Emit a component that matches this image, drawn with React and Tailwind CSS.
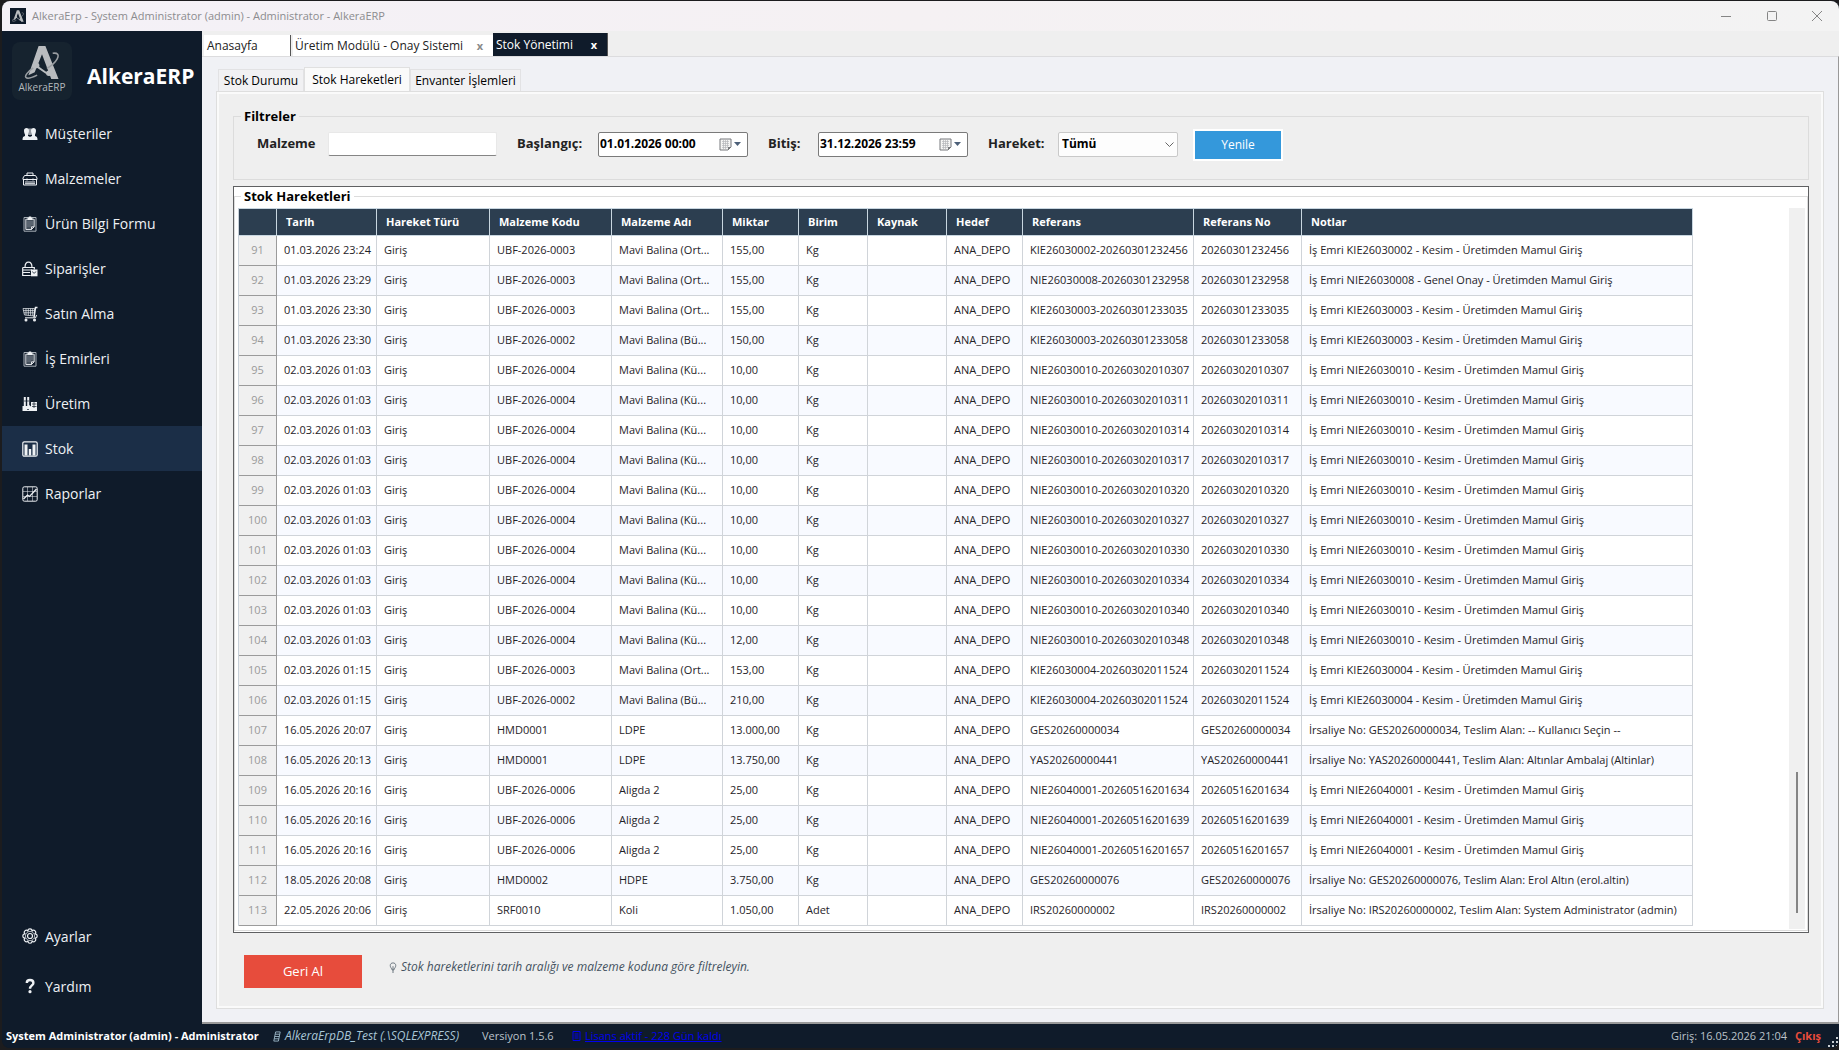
import React from "react";

const rows = [
  [91, "01.03.2026 23:24", "UBF-2026-0003", "Mavi Balina (Ort...", "155,00", "Kg", "KIE26030002-20260301232456", "20260301232456", "İş Emri KIE26030002 - Kesim - Üretimden Mamul Giriş"],
  [92, "01.03.2026 23:29", "UBF-2026-0003", "Mavi Balina (Ort...", "155,00", "Kg", "NIE26030008-20260301232958", "20260301232958", "İş Emri NIE26030008 - Genel Onay - Üretimden Mamul Giriş"],
  [93, "01.03.2026 23:30", "UBF-2026-0003", "Mavi Balina (Ort...", "155,00", "Kg", "KIE26030003-20260301233035", "20260301233035", "İş Emri KIE26030003 - Kesim - Üretimden Mamul Giriş"],
  [94, "01.03.2026 23:30", "UBF-2026-0002", "Mavi Balina (Bü...", "150,00", "Kg", "KIE26030003-20260301233058", "20260301233058", "İş Emri KIE26030003 - Kesim - Üretimden Mamul Giriş"],
  [95, "02.03.2026 01:03", "UBF-2026-0004", "Mavi Balina (Kü...", "10,00", "Kg", "NIE26030010-20260302010307", "20260302010307", "İş Emri NIE26030010 - Kesim - Üretimden Mamul Giriş"],
  [96, "02.03.2026 01:03", "UBF-2026-0004", "Mavi Balina (Kü...", "10,00", "Kg", "NIE26030010-20260302010311", "20260302010311", "İş Emri NIE26030010 - Kesim - Üretimden Mamul Giriş"],
  [97, "02.03.2026 01:03", "UBF-2026-0004", "Mavi Balina (Kü...", "10,00", "Kg", "NIE26030010-20260302010314", "20260302010314", "İş Emri NIE26030010 - Kesim - Üretimden Mamul Giriş"],
  [98, "02.03.2026 01:03", "UBF-2026-0004", "Mavi Balina (Kü...", "10,00", "Kg", "NIE26030010-20260302010317", "20260302010317", "İş Emri NIE26030010 - Kesim - Üretimden Mamul Giriş"],
  [99, "02.03.2026 01:03", "UBF-2026-0004", "Mavi Balina (Kü...", "10,00", "Kg", "NIE26030010-20260302010320", "20260302010320", "İş Emri NIE26030010 - Kesim - Üretimden Mamul Giriş"],
  [100, "02.03.2026 01:03", "UBF-2026-0004", "Mavi Balina (Kü...", "10,00", "Kg", "NIE26030010-20260302010327", "20260302010327", "İş Emri NIE26030010 - Kesim - Üretimden Mamul Giriş"],
  [101, "02.03.2026 01:03", "UBF-2026-0004", "Mavi Balina (Kü...", "10,00", "Kg", "NIE26030010-20260302010330", "20260302010330", "İş Emri NIE26030010 - Kesim - Üretimden Mamul Giriş"],
  [102, "02.03.2026 01:03", "UBF-2026-0004", "Mavi Balina (Kü...", "10,00", "Kg", "NIE26030010-20260302010334", "20260302010334", "İş Emri NIE26030010 - Kesim - Üretimden Mamul Giriş"],
  [103, "02.03.2026 01:03", "UBF-2026-0004", "Mavi Balina (Kü...", "10,00", "Kg", "NIE26030010-20260302010340", "20260302010340", "İş Emri NIE26030010 - Kesim - Üretimden Mamul Giriş"],
  [104, "02.03.2026 01:03", "UBF-2026-0004", "Mavi Balina (Kü...", "12,00", "Kg", "NIE26030010-20260302010348", "20260302010348", "İş Emri NIE26030010 - Kesim - Üretimden Mamul Giriş"],
  [105, "02.03.2026 01:15", "UBF-2026-0003", "Mavi Balina (Ort...", "153,00", "Kg", "KIE26030004-20260302011524", "20260302011524", "İş Emri KIE26030004 - Kesim - Üretimden Mamul Giriş"],
  [106, "02.03.2026 01:15", "UBF-2026-0002", "Mavi Balina (Bü...", "210,00", "Kg", "KIE26030004-20260302011524", "20260302011524", "İş Emri KIE26030004 - Kesim - Üretimden Mamul Giriş"],
  [107, "16.05.2026 20:07", "HMD0001", "LDPE", "13.000,00", "Kg", "GES20260000034", "GES20260000034", "İrsaliye No: GES20260000034, Teslim Alan: -- Kullanıcı Seçin --"],
  [108, "16.05.2026 20:13", "HMD0001", "LDPE", "13.750,00", "Kg", "YAS20260000441", "YAS20260000441", "İrsaliye No: YAS20260000441, Teslim Alan: Altınlar Ambalaj (Altinlar)"],
  [109, "16.05.2026 20:16", "UBF-2026-0006", "Aligda 2", "25,00", "Kg", "NIE26040001-20260516201634", "20260516201634", "İş Emri NIE26040001 - Kesim - Üretimden Mamul Giriş"],
  [110, "16.05.2026 20:16", "UBF-2026-0006", "Aligda 2", "25,00", "Kg", "NIE26040001-20260516201639", "20260516201639", "İş Emri NIE26040001 - Kesim - Üretimden Mamul Giriş"],
  [111, "16.05.2026 20:16", "UBF-2026-0006", "Aligda 2", "25,00", "Kg", "NIE26040001-20260516201657", "20260516201657", "İş Emri NIE26040001 - Kesim - Üretimden Mamul Giriş"],
  [112, "18.05.2026 20:08", "HMD0002", "HDPE", "3.750,00", "Kg", "GES20260000076", "GES20260000076", "İrsaliye No: GES20260000076, Teslim Alan: Erol Altın (erol.altin)"],
  [113, "22.05.2026 20:06", "SRF0010", "Koli", "1.050,00", "Adet", "IRS20260000002", "IRS20260000002", "İrsaliye No: IRS20260000002, Teslim Alan: System Administrator (admin)"],
];

const columns = [
  ["Tarih", "w-[100px]"],
  ["Hareket Türü", "w-[113px]"],
  ["Malzeme Kodu", "w-[122px]"],
  ["Malzeme Adı", "w-[111px]"],
  ["Miktar", "w-[76px]"],
  ["Birim", "w-[69px]"],
  ["Kaynak", "w-[79px]"],
  ["Hedef", "w-[76px]"],
  ["Referans", "w-[171px]"],
  ["Referans No", "w-[108px]"],
  ["Notlar", "w-[391px]"],
];

function Icon({ children, className = "size-4" }) {
  return (
    <svg viewBox="0 0 16 16" className={className} fill="none" stroke="currentColor" strokeWidth="1.2" aria-hidden="true">
      {children}
    </svg>
  );
}

const UsersIcon = () => (
  <Icon>
    <g fill="currentColor" stroke="none">
      <path d="M2 4.8C2 3 3 2 4.5 2S7 3 7 4.8 6.300 8 6 8.500V10c1 .3 1.600.6 2 1 .4-.4 1-.7 2-1V8.500C9.700 8 9 6.600 9 4.800S10 2 11.500 2 14 3 14 4.800 13.300 8 13 8.500V10c2 .6 2.500 1.500 2.500 4H.500c0-2.500.5-3.400 2.500-4V8.500C2.700 8 2 6.600 2 4.800Z" />
      <path d="M6.500 2.500h3V9h-3z" />
    </g>
    <path d="M8 2v7" stroke="#0f1b2a" strokeWidth="0.8" />
  </Icon>
);
const ToolboxIcon = () => (
  <Icon>
    <path d="M5 4V2h6v2M2.500 4.500h11L15 7v1.500H1V7zM1.500 8.500V14h13V8.500M3 11h10M3 12.700h10M5 7.500v2M11 7.500v2" strokeWidth="1" />
  </Icon>
);
const ClipboardIcon = () => (
  <Icon>
    <path d="M2 1.500h12v13.700H2z" strokeWidth="1" stroke="#a9b0b7" />
    <path d="M3.800 3.200h8.400v7.600L9.500 13.500H3.800z" fill="#46515d" strokeWidth="0.900" />
    <path d="M12.200 10.800H9.500v2.700" strokeWidth="0.900" />
    <path d="M5.500 1.800h1.300V.500h2.400v1.300h1.300V4h-5z" fill="currentColor" stroke="none" />
    <path d="M5 6h6M5 8h6M5 10h4" stroke="#8b949d" strokeWidth="0.6" />
  </Icon>
);
const BagIcon = () => (
  <Icon>
    <path d="M3 6.500C3 3 4.300 1.200 6.500 1.200S10 3 10 6.500" />
    <path d="M.7 6.500h11.600v2M.7 6.500v8h8M1 9h9M1 11.500h7" />
    <path d="M9 8.500h6.500v6.800H9z" fill="currentColor" stroke="none" />
    <path d="M10.500 10.500c.3 2 3 2 3.300 0" stroke="#0f1b2a" strokeWidth="0.8" />
  </Icon>
);
const CartIcon = () => (
  <Icon>
    <path d="M15.500 1.500H13.500L12 11.500" strokeWidth="1.500" />
    <path d="M1 2.500h11.500v7.500L2.500 9zM1.300 4.600h11M1.800 6.800h10.500M4 2.500v6.700M6.300 2.500v7M8.600 2.500v7M10.700 2.500v7.300" strokeWidth="0.7" />
    <path d="M3 11.800h10.500L14.500 9" strokeWidth="1" />
    <circle cx="4" cy="13.900" r="0.900" fill="currentColor" />
    <circle cx="12.500" cy="13.900" r="0.900" fill="currentColor" />
  </Icon>
);
const FactoryIcon = () => (
  <Icon>
    <path d="M1.800 1h2v9h1.400V1h2v8L9 10.500V6h6v9H.500v-5h1.300z" fill="currentColor" stroke="none" />
    <path d="M10 8h4.500M10 10.500h4.500M12 6v6M2 5h5M5 13.500h2" stroke="#0f1b2a" strokeWidth="0.7" />
  </Icon>
);
const BarsIcon = () => (
  <Icon>
    <rect x="0.800" y="0.800" width="14.400" height="14.400" rx="1.500" />
    <path d="M2.500 3.500h3v11h-3zM6.800 8h2.400v6.500H6.800zM10.500 3.500h3v11h-3z" fill="currentColor" stroke="none" />
  </Icon>
);
const ChartIcon = () => (
  <Icon>
    <rect x="0.800" y="0.800" width="14.400" height="14.400" rx="1.500" strokeWidth="1" />
    <path d="M5.500 1v14M10.500 1v14M1 5.500h14M1 10.500h14" strokeWidth="0.500" />
    <path d="m1.500 13 4-4 2 1.500L14.500 3" strokeWidth="1.300" />
  </Icon>
);
const GearIcon = () => (
  <Icon>
    {[0, 45, 90, 135, 180, 225, 270, 315].map((a) => (
      <path key={a} d="M5.800 3.300C5.800 0 10.200 0 10.200 3.300" strokeWidth="1.100" transform={`rotate(${a} 8 8)`} />
    ))}
    <circle cx="8" cy="8" r="4.600" strokeWidth="0.700" />
    <circle cx="8" cy="8" r="2.500" strokeWidth="1.200" />
  </Icon>
);
const QuestionIcon = () => (
  <Icon>
    <path d="M4.800 5C4.800 2.800 6 2 8 2s3.400 1 3.400 3C11.400 7.500 8 7.500 8 10.800" strokeWidth="2.400" />
    <circle cx="8" cy="13.700" r="1.600" fill="currentColor" stroke="none" />
  </Icon>
);
const CalendarIcon = () => (
  <svg viewBox="0 0 13 13" className="size-[13px]" aria-hidden="true">
    <path d="M1 1h11v8l-3 3H1z" fill="#f4f4f4" stroke="#77797d" />
    <path d="M3 3.500h7M3 5.500h7M3 7.500h7M3 9.500h5M4.500 2v9M6.500 2v9M8.500 2v8" stroke="#b4b6ba" strokeWidth="0.700" />
    <path d="M12 9H9v3z" fill="#77797d" />
  </svg>
);

function LogoMark({ className }) {
  return (
    <svg viewBox="0 0 36 36" className={className} fill="none" aria-hidden="true">
      <path d="M14.500 1h7L35 35h-7.500L18 9.500 10.500 28 4 31z" fill="#b9bcbf" />
      <path d="M12 21.500 22 28.500 27 31" stroke="#b9bcbf" strokeWidth="2" />
      <path d="M29 8.500c5-.8 7 1.500 4.500 6-2 3.500-6 7-10.500 9.500M9 23.500c-6 4-9 8.500-7.500 10C3 35 8 33.500 13 31" stroke="#9a9ea2" strokeWidth="1.600" />
      <circle cx="12.500" cy="21" r="2.800" fill="#b9bcbf" />
      <circle cx="25" cy="29" r="2.800" fill="#b9bcbf" />
    </svg>
  );
}

const nav = [
  ["Müşteriler", UsersIcon],
  ["Malzemeler", ToolboxIcon],
  ["Ürün Bilgi Formu", ClipboardIcon],
  ["Siparişler", BagIcon],
  ["Satın Alma", CartIcon],
  ["İş Emirleri", ClipboardIcon],
  ["Üretim", FactoryIcon],
  ["Stok", BarsIcon],
  ["Raporlar", ChartIcon],
];

function TitleBar() {
  return (
    <header className="flex h-[30px] shrink-0 items-center bg-linear-to-r from-[#f4f1f7] via-[#f5f1f3] to-[#f3f3f3] pl-2">
      <span className="flex size-4 items-center justify-center bg-[#0f1b2a]">
        <LogoMark className="size-3" />
      </span>
      <h1 className="ml-[6px] text-[11px] text-[#8c8c8f]">AlkeraErp - System Administrator (admin) - Administrator - AlkeraERP</h1>
      <div className="ml-auto flex text-[#858585]">
        <button aria-label="Simge durumuna küçült" className="flex h-7 w-[46px] items-center justify-center">
          <svg viewBox="0 0 10 10" className="size-[10px]" stroke="currentColor"><path d="M0 5.500h10" /></svg>
        </button>
        <button aria-label="Ekranı kapla" className="flex h-7 w-[46px] items-center justify-center">
          <svg viewBox="0 0 10 10" className="size-[10px]" fill="none" stroke="currentColor"><rect x="0.500" y="0.500" width="9" height="9" rx="1" /></svg>
        </button>
        <button aria-label="Kapat" className="flex h-7 w-11 items-center justify-center">
          <svg viewBox="0 0 10 10" className="size-[10px]" stroke="currentColor"><path d="m0 0 10 10M10 0 0 10" /></svg>
        </button>
      </div>
    </header>
  );
}

function Sidebar() {
  return (
    <aside className="flex w-[200px] shrink-0 flex-col text-[#eef1f4]">
      <div className="flex h-20 items-start pl-[10px] pt-[11px]">
        <div className="flex h-[58px] w-[60px] flex-col items-center rounded-lg bg-[#16232f] pt-[3px]">
          <LogoMark className="h-[35px] w-[36px]" />
          <span className="mt-px text-[10px] leading-3 text-[#b3b8bc]">AlkeraERP</span>
        </div>
        <span className="ml-[15px] mt-5 text-[21px] leading-7 font-bold text-white">AlkeraERP</span>
      </div>
      <nav className="flex grow flex-col pb-[13px]">
        {nav.map(([label, Ico]) => (
          <button key={label} className={`flex h-[45px] items-center gap-[7px] pl-5 text-left text-[14px] ${label === "Stok" ? "bg-[#1b2e47]" : ""}`}>
            <Ico />
            {label}
          </button>
        ))}
        <button className="mt-auto flex h-[50px] items-center gap-[7px] pl-5 text-left text-[14px]"><GearIcon />Ayarlar</button>
        <button className="flex h-[50px] items-center gap-[7px] pl-5 text-left text-[14px]"><QuestionIcon />Yardım</button>
      </nav>
    </aside>
  );
}

function DocumentTabs() {
  return (
    <div className="flex h-[25px] shrink-0 items-end bg-[#efefef] pl-[2px] text-[12px] leading-4">
      <button className="mr-[2px] flex h-[21px] w-[87px] items-center border-r border-[#555] bg-white pl-[3px] text-[#222]">Anasayfa</button>
      <div className="flex h-[21px] w-[200px] items-center justify-between bg-white pl-[2px] pr-[10px] text-[#222]">
        <button>Üretim Modülü - Onay Sistemi</button>
        <button aria-label="Üretim Modülü sekmesini kapat" className="text-[11px] leading-4 font-bold text-[#8a8a8a]">x</button>
      </div>
      <div className="flex h-[23px] w-[115px] items-center justify-between border-r border-[#555] bg-[#0f1b2a] pl-[3px] pr-[10px] text-white">
        <button>Stok Yönetimi</button>
        <button aria-label="Stok Yönetimi sekmesini kapat" className="text-[11px] leading-4 font-bold">x</button>
      </div>
    </div>
  );
}

function DateField({ id, label, value, labelWidth }) {
  return (
    <>
      <label htmlFor={id} className={`${labelWidth} text-[#222]`}>{label}</label>
      <div className="mr-5 flex h-[25px] w-[150px] items-center rounded-[2px] border border-[#7a7a7a] bg-white pr-[6px]">
        <input id={id} type="text" defaultValue={value} className="w-[120px] min-w-0 grow pl-px text-[12px] font-bold text-black outline-none" />
        <button aria-label={`${label} takvimi`} className="flex items-center gap-[2px]">
          <CalendarIcon />
          <svg viewBox="0 0 7 4" className="h-1 w-[7px]" fill="#4d6079"><path d="M0 0h7L3.500 4z" /></svg>
        </button>
      </div>
    </>
  );
}

function Filters() {
  return (
    <fieldset className="min-w-0 border border-[#dcdcdc] pb-[18px] pl-[23px] pt-1">
      <legend className="-ml-4 px-[3px] text-[13px] leading-[18px] font-bold text-black">Filtreler</legend>
      <div className="flex h-8 items-start text-[13px] font-bold">
        <div className="flex h-[30px] items-center">
          <label htmlFor="malzeme" className="w-[71px] text-[#222]">Malzeme</label>
          <input id="malzeme" type="text" className="mr-5 h-6 w-[169px] rounded-[2px] border border-[#e8e8e8] border-b-[#858585] bg-white px-1 outline-none" />
          <DateField id="baslangic" label="Başlangıç:" value="01.01.2026 00:00" labelWidth="w-[81px]" />
          <DateField id="bitis" label="Bitiş:" value="31.12.2026 23:59" labelWidth="w-[50px]" />
          <label htmlFor="hareket" className="w-[70px] text-[#222]">Hareket:</label>
          <div className="relative mr-[15px]">
            <select id="hareket" className="h-[25px] w-[120px] appearance-none rounded-[2px] border border-[#c9c9c9] bg-[#fdfdfd] pl-[3px] text-[12px] font-bold text-black outline-none">
              <option>Tümü</option>
            </select>
            <svg viewBox="0 0 9 5" className="pointer-events-none absolute right-1 top-[10px] h-[5px] w-[9px]" fill="none" stroke="#666"><path d="m.5.500 4 4 4-4" /></svg>
          </div>
        </div>
        <button className="h-8 w-[90px] border-2 border-white bg-[#3498db] text-[12px] font-normal text-white">Yenile</button>
      </div>
    </fieldset>
  );
}

function MovementTable() {
  return (
    <table className="table-fixed border-separate border-spacing-0 border-l border-[#c8d0d8] text-left text-[11px] leading-4 whitespace-nowrap">
      <colgroup>
        <col className="w-[38px]" />
        {columns.map(([name, w]) => <col key={name} className={w} />)}
      </colgroup>
      <thead>
        <tr className="h-7 text-white">
          <th className="border border-l-0 border-[#c8d6e0] bg-[#2c3e50] p-0" aria-label="Sıra" />
          {columns.map(([name]) => (
            <th key={name} className="border border-l-0 border-[#c8d6e0] bg-[#2c3e50] py-0 pl-[9px] pr-0 font-bold">{name}</th>
          ))}
        </tr>
      </thead>
      <tbody className="text-[#1f2328]">
        {rows.map(([no, date, code, name, qty, unit, ref, refNo, note]) => (
          <tr key={no} className="h-[30px] odd:bg-white even:bg-[#f8faff]">
            <th scope="row" className="border-r border-b border-[#9b9b9b] bg-[#f0f0f0] px-0 pt-0 pb-[2px] text-center font-normal text-[#9a9a9a]">{no}</th>
            {[date, "Giriş", code, name, qty, unit, "", "ANA_DEPO", ref, refNo, note].map((v, i) => (
              <td key={i} className="border-r border-b border-[#d0d4d9] pt-0 pb-[2px] pl-[7px] pr-0">{v}</td>
            ))}
          </tr>
        ))}
      </tbody>
    </table>
  );
}

function StockPage() {
  return (
    <div className="flex grow flex-col bg-[#f0f1f5] px-[14px] pb-[13px] pt-[10px]">
      <div role="tablist" className="flex items-end pl-[2px] text-[12px] leading-4 text-black">
        <button role="tab" aria-selected="false" className="h-[22px] w-[86px] border border-b-0 border-[#e2e2e4] bg-[#f1f1f3] pt-px">Stok Durumu</button>
        <button role="tab" aria-selected="true" className="-mb-px h-[25px] w-[106px] border border-b-0 border-[#e0e0e0] bg-[#fafafa]">Stok Hareketleri</button>
        <button role="tab" aria-selected="false" className="h-[22px] w-[111px] border border-b-0 border-[#e2e2e4] bg-[#f1f1f3] pt-px">Envanter İşlemleri</button>
      </div>
      <div role="tabpanel" className="flex grow flex-col border border-[#dedede] bg-[#fafafa] p-[2px]">
        <div className="flex grow flex-col bg-[#efefef] pl-[14px] pr-3 pt-[13px]">
          <Filters />
          <div className="mt-[6px] flex grow flex-col border border-[#5f6062] bg-white pb-px">
            <fieldset className="flex min-w-0 grow flex-col border border-[#dcdcdc]">
              <legend className="ml-[6px] px-[3px] text-[13px] leading-[18px] font-bold text-black">Stok Hareketleri</legend>
              <div className="flex grow items-start justify-between pb-px pl-[3px] pr-[2px] pt-[3px]">
                <MovementTable />
                <div className="flex w-4 flex-col items-center justify-end self-stretch bg-[#f0f0f0] pb-4">
                  <div className="h-[141px] w-[2px] bg-[#858585]" />
                </div>
              </div>
            </fieldset>
          </div>
          <div className="flex items-start pb-[18px] pl-[11px] pt-[22px]">
            <button className="h-[33px] w-[118px] bg-[#e74c3c] text-[13px] text-white">Geri Al</button>
            <p className="ml-[27px] mt-1 flex items-center gap-1 text-[12px] leading-4 text-[#44525f] italic">
              <svg viewBox="0 0 8 12" className="h-[11px] w-2" fill="none" stroke="currentColor" aria-hidden="true">
                <path d="M2.500 8C2.500 6.500 1 6 1 3.800 1 2 2.300 1 4 1s3 1 3 2.800C7 6 5.500 6.500 5.500 8zM3 9.500h2M3 11h2M4 8V4.500" strokeWidth="0.800" />
              </svg>
              Stok hareketlerini tarih aralığı ve malzeme koduna göre filtreleyin.
            </p>
          </div>
        </div>
      </div>
    </div>
  );
}

function StatusBar() {
  return (
    <footer className="flex h-6 shrink-0 items-center bg-[#0f1b2a] pl-1 text-[11px] text-[#bcc3ca]">
      <span className="w-[267px] font-bold text-white">System Administrator (admin) - Administrator</span>
      <span className="flex w-[209px] items-center gap-1 text-[12px] text-[#a9c6d6] italic">
        <svg viewBox="0 0 8 12" className="h-[11px] w-2" fill="none" stroke="currentColor" aria-hidden="true">
          <path d="M2.500 1h5L5.500 11h-5zM2 3.500h5M1.500 6h5M1 8.500h5" strokeWidth="0.900" />
        </svg>
        AlkeraErpDB_Test (.\SQLEXPRESS)
      </span>
      <span className="w-[90px]">Versiyon 1.5.6</span>
      <a href="#lisans" className="flex items-center gap-1 text-[#0000ee] underline">
        <svg viewBox="0 0 9 10" className="h-[10px] w-[9px]" fill="none" stroke="currentColor" aria-hidden="true">
          <path d="M1 .500h7v9H1zM2.500 3h4M2.500 5h4M2.500 7h4" />
        </svg>
        Lisans aktif - 228 Gün kaldı
      </a>
      <span className="ml-auto">Giriş: 16.05.2026 21:04</span>
      <button className="ml-2 font-bold text-[#e74c3c]">Çıkış</button>
      <svg viewBox="0 0 12 12" className="ml-[6px] size-3 self-end" fill="#c9ced3" aria-hidden="true">
        <path d="M9 1h2v2H9zM5 5h2v2H5zM9 5h2v2H9zM1 9h2v2H1zM5 9h2v2H5zM9 9h2v2H9z" />
      </svg>
    </footer>
  );
}

export default function App() {
  return (
    <div className="flex min-h-screen flex-col bg-[#1c1c1e] pb-[2px] pl-[2px] pt-px font-['Open_Sans',sans-serif]">
      <div className="flex grow flex-col overflow-hidden rounded-lg bg-[#0f1b2a]">
        <TitleBar />
        <div className="flex grow">
          <Sidebar />
          <main className="flex min-w-0 grow flex-col">
            <DocumentTabs />
            <div className="flex grow flex-col border-r border-b-2 border-t border-[#999] border-t-[#dcdcde]">
              <StockPage />
            </div>
          </main>
        </div>
        <StatusBar />
      </div>
    </div>
  );
}
